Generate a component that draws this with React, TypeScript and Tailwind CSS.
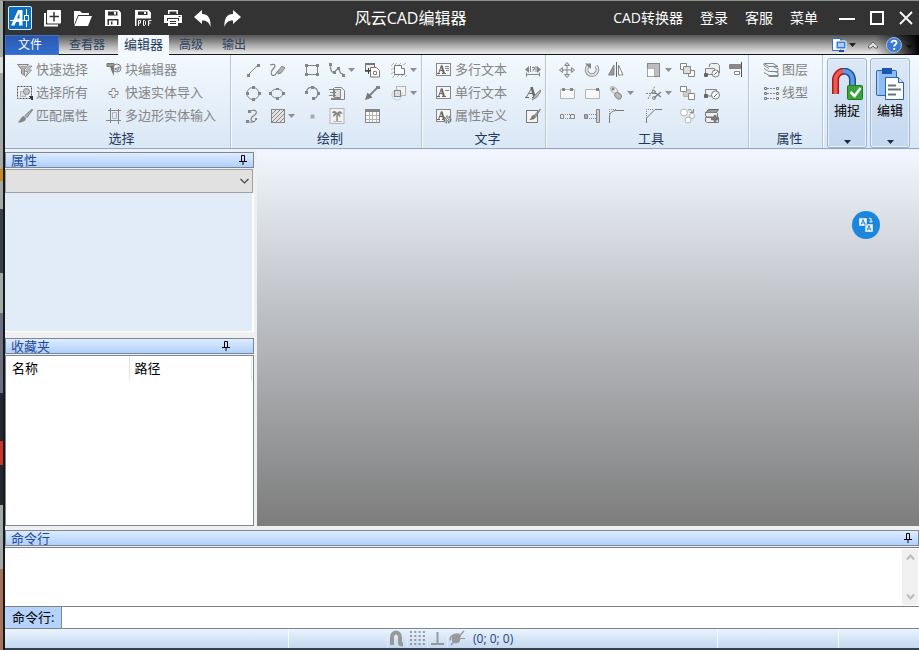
import React, { useState } from 'react';

const G = '#858585';
const L = '#b4b4b4';

// All ribbon drawings live on a 16x16 grid
const icons: Record<string, React.ReactNode> = {
  quickSelect: (
    <>
      <path d="M.5 2.500h11l-4 5v6l-3-2V7.500z" fill="#b0b0b0" stroke={G} />
      <path d="M2 3.500h8" stroke="#ddd" />
      <path d="M12 4 8.500 9.500H11L8.500 15l6-7h-3L15 4z" fill="#ccc" stroke={G} strokeWidth=".8" />
    </>
  ),
  selectAll: (
    <>
      <rect x=".5" y="1.500" width="14" height="12" stroke="#555" strokeDasharray="2 1" />
      <rect x="3.500" y="6.500" width="5" height="5" fill="#ddd" stroke={L} />
      <circle cx="9.500" cy="6.500" r="3" fill="#c4c4c4" stroke={G} />
      <path d="M12 11h4v4h-1.500l-1-1.500z" fill="#333" />
    </>
  ),
  brush: (
    <>
      <path d="M15 1 8 7.500l2 2L15.500 2z" fill="#aaa" stroke={G} />
      <path d="M7 8c-3 0-3 4-6.500 6.500C5 15 9 13 9 10z" fill={G} />
    </>
  ),
  blockEdit: (
    <>
      <path d="M1 1.500h7v3H1z" fill="#999" stroke="#777" />
      <path d="M4 4.500h4V14L5.500 9z" fill="#777" />
      <circle cx="11" cy="6" r="4" stroke={G} />
      <path d="m8.500 7 5-2-1.500 3.500z" fill="#ddd" stroke={G} />
    </>
  ),
  plus: <path d="M6 3.500h3v3h3v3H9v3H6v-3H3v-3h3z" fill="#f4f4f4" stroke={G} />,
  polyImport: (
    <>
      <path d="M4.500 0v15M0 12.500h15M12.500 1v15M2 2.500h13" stroke={G} />
      <path d="M6.500 4.500h4v6h-4z" stroke={L} />
    </>
  ),
  line: (
    <>
      <path d="m3 13 10-10" stroke={G} />
      <path d="M2 12h3v3H2zM12 2h3v3h-3z" fill={G} />
    </>
  ),
  circle: (
    <>
      <circle cx="8" cy="8.500" r="6" stroke={G} />
      <path d="M7 1h3v3H7zM7 13h3v3H7zM1 7h3v3H1zM13 7h3v3h-3z" fill={G} />
    </>
  ),
  spline: (
    <>
      <path d="M4 3.500c8-4 9 2 5 4s-4 7 1 6" stroke={G} strokeWidth="1.200" />
      <path d="M3 2h3v3H3zM1 12h3v3H1zM10 10h2v2h-2z" fill={G} />
      <path d="M3 13.500c4 1.500 7 .5 8-2.500" stroke={G} />
    </>
  ),
  sketch: (
    <>
      <path d="M1 3c6-2 6 1 3 4s-2 8 2 6l3-4" stroke={G} strokeWidth="1.200" />
      <path d="m9 9 4-5 3 2-4 5-3 1z" fill="#b4b4b4" stroke={G} />
    </>
  ),
  ellipse: (
    <>
      <ellipse cx="8" cy="8.500" rx="6" ry="4.500" stroke={G} />
      <path d="M7 3h3v2H7zM7 12h3v3H7zM0 7h3v3H0zM13 7h3v3h-3z" fill={G} />
    </>
  ),
  hatch: (
    <>
      <rect x="2.500" y="1.500" width="13" height="13" fill="#e4e4e4" stroke={G} />
      <path d="m3 6 4-4M3 10l8-8M3 14 15 2M7 14l8-8M11 14l4-4" stroke={G} />
    </>
  ),
  rect: (
    <>
      <rect x="2.500" y="3.500" width="11" height="9" stroke={G} />
      <path d="M1 2h3v3H1zM12 2h3v3h-3zM1 11h3v3H1zM12 11h3v3h-3z" fill={G} />
    </>
  ),
  arc: (
    <>
      <path d="M2.500 7C3 1 13 .5 14 7.500c0 4-2 6-5 6" stroke={G} strokeWidth="1.200" />
      <path d="M1 6h3v3H1zM7 1h3v3H7zM13 7h3v3h-3zM8 12h3v3H8z" fill={G} />
    </>
  ),
  point: <path d="M6.500 6.500h4v4h-4z" fill="#aaa" />,
  polyline: (
    <>
      <path d="M1.500 2v4c1 4 2 5 4 4l4-4 2 5 4 2" stroke={G} strokeWidth="1.200" />
      <path d="M0 1h3v3H0zM4 9h3v3H4zM8 5h3v3H8zM13 12h3v3h-3z" fill={G} />
    </>
  ),
  xref: (
    <>
      <path d="M5.500 2.500h7l3 3v9h-8" fill="#f2f2f2" stroke={G} />
      <path d="M5.500 4.500h6v8h-6z" fill="#ddd" stroke={G} />
      <path d="M0 4.500h7M1 7.500h6M0 10.500h7M4.500 3v9" stroke={G} />
      <path d="M2 14h10" stroke={G} strokeWidth="2" />
    </>
  ),
  image: (
    <>
      <rect x="1" y=".5" width="14" height="15" fill="#f2f2f2" stroke={L} />
      <path d="M8.500 5c-1 3 0 6-.5 8" stroke={G} strokeWidth="1.500" />
      <path d="M8 5C6 2 3.500 3 3 5l3 .2C4 6 4 8 4.500 9L8 6l3 3.500c.8-1.500.3-3-1-4l3.500.5C13 3 10 2 8 5z" fill={G} />
      <path d="M4 13.500h9" stroke={L} />
    </>
  ),
  blockInsert: (
    <>
      <rect x="1.500" y="1.500" width="9" height="8" fill="#eee" stroke="#777" />
      <path d="M1 1h10v2H1z" fill="#777" />
      <path d="M6.500 5.500h6l3 3v6.500h-9z" fill="#fff" stroke="#777" />
      <path d="M9.500 9.500h3v3h-3z" stroke={G} />
      <path d="M1 8.500h6M4.500 6v6" stroke="#444" />
    </>
  ),
  leader: (
    <>
      <path d="m14 2-9 9" stroke={G} strokeWidth="2" />
      <path d="M1 15 3.500 7.500l5 5z" fill="#777" />
      <path d="M12 1h4v3h-4z" fill={G} />
    </>
  ),
  table: (
    <>
      <rect x="1.500" y="1.500" width="14" height="13" fill="#f8f8f8" stroke={G} />
      <path d="M1 1h15v3H1z" fill={G} />
      <path d="M2 7.500h13M2 11.500h13M5.500 4v10M8.500 4v10M12.500 4v10" stroke={L} />
    </>
  ),
  region: (
    <>
      <path d="m0 4 3-3M4 3l2-2M8 3l2-2M12 3l3-2M0 8l3-2M0 12l3-2M1 16l3-3M6 15l2-2M10 15l2-2M14 15l2-2" stroke={L} />
      <path d="M3.500 3.500h7v3h3v6h-10z" fill="#fff" stroke="#777" />
    </>
  ),
  regionAlt: (
    <>
      <rect x="5.500" y="1.500" width="9" height="9" fill="#f2f2f2" stroke={L} />
      <circle cx="6" cy="10" r="5" stroke="#ccc" />
      <rect x="3.500" y="5.500" width="6" height="6" fill="#ddd" stroke={G} />
    </>
  ),
  stretchText: (
    <>
      <path d="M1 12.500h14M1.500 10.500v4M14.500 10.500v4" stroke={G} />
      <path d="M0 7.500 4 4v7zM16 7.500 12 4v7z" fill={G} />
      <path d="M5.500 4v6M7 5.500h2.500v2H8v2M11 4v6" stroke={G} />
    </>
  ),
  textStyle: (
    <>
      <path d="m1.500 12 5-9" stroke="#777" />
      <path d="m6.500 2 3 10" stroke="#666" strokeWidth="2.500" />
      <path d="M4 8.500h4M0 12.500h4M7 12.500h4" stroke="#666" />
      <path d="M15.500 5 10 10l-3 5 5-3 4-6z" fill="#bbb" stroke={G} />
    </>
  ),
  textEdit: (
    <>
      <rect x="1.500" y="2.500" width="11" height="12" fill="#f4f4f4" stroke="#777" />
      <path d="m15.500 1-6 6 1.500 1.500z" fill="#aaa" stroke="#777" />
      <path d="M9 7c-3 0-2 3-5 5 4 0 6-1 7-3z" fill="#777" />
    </>
  ),
  move: (
    <>
      <path d="M8 2v12M2 8h12" stroke={G} />
      <path d="m8 .5 2.500 3h-5zM8 15.500l-2.500-3h5zM.5 8l3-2.500v5zM15.500 8l-3 2.500v-5z" fill="#ddd" stroke={G} />
    </>
  ),
  rotate: (
    <>
      <path d="M4 4c-3 4-1 9 4 9s7-6 4-9" stroke={G} strokeWidth="3.500" />
      <path d="M4 4c-3 4-1 9 4 9s7-6 4-9" stroke="#e4e4e4" strokeWidth="1.800" />
      <path d="M1 1.500h6V7z" fill={G} />
    </>
  ),
  mirror: (
    <>
      <path d="M6 3v10H.5z" fill="#999" stroke={G} />
      <path d="M10.500 3v10H15z" fill="#fff" stroke={G} />
      <path d="M8.500 0v15" stroke="#666" />
    </>
  ),
  joinA: (
    <>
      <path d="M1.500 4.500h14v9h-14z" fill="#f8f8f8" stroke={L} />
      <path d="M3 3h3v3H3zM11 3h3v3h-3z" fill={G} />
    </>
  ),
  joinB: (
    <>
      <path d="M1.500 4.500h14v9h-14z" fill="#f8f8f8" stroke={L} />
      <path d="M12 3h3v3h-3z" fill={G} />
    </>
  ),
  trimBetween: (
    <>
      <path d="M1.500 6.500h3v4h-3zM11.500 6.500h4v4h-4z" fill="#eee" stroke={G} />
      <path d="M6 6.500h5M6 10.500h5" stroke={G} strokeDasharray="1 1" />
    </>
  ),
  extend: (
    <>
      <path d="M.5 6.500h3v4h-3z" fill="#aaa" stroke={G} />
      <path d="M5 6.500h7M5 10.500h7" stroke={G} strokeDasharray="1 1" />
      <path d="M12.500 1.500h3v13h-3z" fill="#ccc" stroke={G} />
    </>
  ),
  explode: (
    <>
      <ellipse cx="6" cy="5" rx="4" ry="2.500" transform="rotate(40 6 5)" fill="#eee" stroke={L} />
      <circle cx="5" cy="4" r="1.500" fill={G} />
      <rect x="7" y="8" width="7" height="5" rx="2" transform="rotate(40 10 10)" fill="#bbb" stroke={G} />
    </>
  ),
  fillet: (
    <>
      <path d="M1.500 15V9C1.500 5 4 2.500 9 2.500h7" stroke="#777" />
      <path d="M1.500 8V1.500H9" stroke={G} strokeDasharray="1 1" />
    </>
  ),
  scale: (
    <>
      <rect x="1.500" y="1.500" width="12" height="13" fill="#bdbdbd" stroke={G} />
      <rect x="1.500" y="6.500" width="7" height="8" fill="#fff" stroke={G} strokeDasharray="1 1" />
    </>
  ),
  trim: (
    <>
      <path d="m2 14 7-13M0 8.500h14" stroke={G} strokeDasharray="2 1" />
      <path d="m8 7 7 5M8 13l7-6" stroke={G} strokeWidth="1.500" />
      <circle cx="8" cy="7" r="1.500" stroke={G} />
      <circle cx="8" cy="13" r="1.500" stroke={G} />
    </>
  ),
  chamfer: (
    <>
      <path d="M.5 15v-5L9 1.500h7" stroke="#777" />
      <path d="M.5 10V1.500H8" stroke={G} strokeDasharray="1 1" />
    </>
  ),
  copy: (
    <>
      <path d="M1.500 1.500h6v6h-6zM9.500 8.500h6v6h-6z" fill="#fff" stroke={G} />
      <path d="M4.500 4.500h7v7h-7z" fill="#ddd" stroke={G} />
    </>
  ),
  array: (
    <>
      <path d="M4.500 4.500h7v7h-7z" fill="#ccc" stroke={L} />
      <path d="M1.500 1.500h6v5h-6zM9.500 8.500h6v6h-6z" fill="#fff" stroke={G} />
    </>
  ),
  polar: (
    <>
      <circle cx="5" cy="4.500" r="3.500" fill="#fff" stroke={L} />
      <circle cx="13" cy="8" r="2.500" fill="#fff" stroke={L} />
      <circle cx="9" cy="12" r="3" fill="#fff" stroke={L} />
      <path d="M9 2c2-1 4 0 4 2M14.500 1v3.500H11" stroke={G} />
    </>
  ),
  offsetA: (
    <>
      <path d="M5.500 5V2.500l2-1h6l2 2V11M1.500 6.500h9v6h-9z" fill="#eee" stroke={G} />
      <circle cx="11.500" cy="11.500" r="3.500" fill="#fff" stroke="#777" />
      <path d="m10 13 3.500-3.500M.5 11.500h3v3h-3z" fill="#666" stroke="#666" />
    </>
  ),
  offsetB: (
    <>
      <path d="M1.500 10V4.500h11V8M1.500 11H8" stroke={G} />
      <circle cx="11.500" cy="10" r="4" fill="#fff" stroke="#777" />
      <path d="m10 12 3.500-3.500M.5 9.500h3v3h-3z" fill="#666" stroke="#666" />
    </>
  ),
  layersAdd: (
    <>
      <path d="m1.500 5 3-3.500h10L12 5z" fill="#999" stroke="#666" />
      <path d="M1.500 5v3l2 1h10V5M1.500 9.500v4l2 1h11v-5z" fill="#eee" stroke="#777" />
      <path d="M11 7v8M7 11h8" stroke="#777" strokeWidth="2.500" />
    </>
  ),
  align: (
    <>
      <path d="M1.500 2.500h11v4h-11z" fill="#888" stroke={G} />
      <path d="M6.500 9.500h5v3h-5z" fill="#fff" stroke={G} />
      <path d="M13.500 0v15" stroke="#555" />
    </>
  ),
  layers: (
    <path d="M1 1.500h9l5 3H6zM1 6.500l5 3h9v-3l-4-1M1 10.500l5 3h9v-3l-4-1M1 1.500v2l5 3M6 13.500v1h9v-2" stroke={G} />
  ),
  linetype: (
    <>
      <path d="M4 3.500h9M4 8.500h9M4 13.500h9" stroke={G} strokeDasharray="2 1" />
      <path
        d="M1.500 2.500h2v2h-2zM13.500 2.500h2v2h-2zM1.500 7.500h2v2h-2zM13.500 7.500h2v2h-2zM1.500 12.500h2v2h-2zM13.500 12.500h2v2h-2z"
        stroke="#777"
      />
    </>
  ),
};

// "A" in a frame, shared by the three text tools
const textFrame = (extra: React.ReactNode) => (
  <>
    <rect x=".5" y="1.500" width="14" height="12" fill="#f6f6f6" stroke={G} />
    <path d="m2.500 11.500 3-8M3.500 8.500h4M1 11.500h3M6 11.500h4" stroke="#666" />
    <path d="m5.500 3.500 2.500 8" stroke="#666" strokeWidth="2" />
    {extra}
  </>
);
icons.mtext = textFrame(<path d="M9 4.500h4M9 6.500h4M10 8.500h3" stroke={G} />);
icons.text = textFrame(<path d="M9 5.500h4" stroke={G} />);
icons.attdef = textFrame(
  <>
    <circle cx="11.500" cy="11.500" r="3" fill="#ddd" stroke="#777" strokeWidth="2" strokeDasharray="1.500 1" />
    <circle cx="11.500" cy="11.500" r="1" fill="#fff" stroke="#777" />
  </>
);

const Arrow = ({ className = 'text-[#8a8f98]' }: { className?: string }) => (
  <svg className={`shrink-0 ${className}`} width="7" height="4" viewBox="0 0 7 4">
    <path d="M0 0h7L3.500 4z" fill="currentColor" />
  </svg>
);

type ToolProps = { icon: string; label?: string; menu?: boolean };

const Tool = ({ icon, label, menu }: ToolProps) => (
  <button
    type="button"
    aria-label={label ?? icon}
    className="flex items-center gap-[3px] whitespace-nowrap text-[13px] text-[#858585]"
  >
    <svg width="16" height="16" viewBox="0 0 16 16" fill="none" className="shrink-0">
      {icons[icon]}
    </svg>
    {label}
    {menu && <Arrow />}
  </button>
);

const Group = ({ title, className, cols, tools }: { title: string; className: string; cols: string; tools: ToolProps[] }) => (
  <section className="flex flex-col border-r border-[#b4c6dc] pt-[3px] shadow-[1px_0_0_#f8fbff]">
    <div className={`grid grid-flow-col grid-rows-[repeat(3,23px)] ${cols} ${className}`}>
      {tools.map((t) => (
        <Tool key={t.icon} {...t} />
      ))}
    </div>
    <h2 className="pl-2 text-center text-[13px] leading-[22px] text-[#1e395b]">{title}</h2>
  </section>
);

const Pin = () => (
  <button type="button" aria-label="固定" className="text-black">
    <svg width="8" height="10" viewBox="0 0 8 10" fill="none" stroke="currentColor">
      <path d="M2.500 6V.5h3V6M0 6.500h8M4 7v3M5.500 1v5" />
    </svg>
  </button>
);

const PanelTitle = ({ children, pad = 'pr-1.5' }: { children: React.ReactNode; pad?: string }) => (
  <div
    className={`flex h-4 items-center justify-between border border-[#7b8794] bg-linear-to-b from-[#deecff] to-[#b0d0fc] pl-[5px] ${pad}`}
  >
    <h3 className="text-[13px] leading-[14px] text-[#1f4a9c]">{children}</h3>
    <Pin />
  </div>
);

const quickIcons: { name: string; art: React.ReactNode }[] = [
  {
    name: '新建',
    art: (
      <>
        <path d="M2 4v12.500h13" stroke="white" strokeWidth="2" />
        <rect x="4" y="1" width="14" height="13.500" rx="1" fill="white" />
        <path d="M11 3v9.500M6.500 7.500h9.500" stroke="#333" strokeWidth="1.500" />
      </>
    ),
  },
  {
    name: '打开',
    art: (
      <>
        <path d="M1 16V2h6l2 2h7v2H5z" fill="white" />
        <path d="M5.500 7H19l-4 10H1.500z" fill="white" />
      </>
    ),
  },
  {
    name: '保存',
    art: (
      <>
        <path d="M2 1h13.500L18 3.500V17H2z" fill="white" />
        <path d="M5 2.500h9.500v4H5zM4.500 10h11v6h-11z" fill="#333" />
        <path d="M11 3h2v2.500h-2zM6 11.500h8V16H6z" fill="white" />
        <path d="M8 12.500h1.500v3H8z" fill="#333" />
      </>
    ),
  },
  {
    name: '保存为 PDF',
    art: (
      <>
        <path d="M2 1h13.500L18 3.500V17H2z" fill="white" />
        <path d="M5 2.500h9.500v3.500H5zM3.500 9.500H18V18H3.500z" fill="#333" />
        <path d="M11 3h2v2h-2z" fill="white" />
        <path d="M5.500 17v-5.500h2v2.500h-2M10.500 11.500v5h1l1-1v-3l-1-1zM15.500 17v-5.500h3M15.500 14h2" stroke="white" />
      </>
    ),
  },
  {
    name: '打印',
    art: (
      <>
        <path d="M5 1h10v4H5zM1 6h18v8H1z" fill="white" />
        <path d="M6.500 2.500h7V5h-7zM4 9h12v3H4z" fill="#333" />
        <path d="M5 10h10v7H5z" fill="white" />
        <path d="M7 12.500h6M7 14.500h6M15.500 7.500h2" stroke="#333" />
      </>
    ),
  },
  { name: '撤销', art: <path d="M1 8 9 1v4c6 0 9 4 8.500 13-1.500-5-4-6.500-8.500-6.500V15z" fill="white" /> },
  { name: '重做', art: <path d="M18 8 10 1v4C4 5 1 9 1.500 18c1.500-5 4-6.500 8.500-6.500V15z" fill="white" /> },
];

const TitleBar = () => (
  <header className="flex h-[34px] items-center bg-[#333333] pl-[3px] text-white">
    <svg width="24" height="24" viewBox="0 0 24 24" fill="none">
      <rect x=".5" y=".5" width="23" height="23" rx="1.500" fill="#0b6fc4" stroke="#d7ecfb" />
      <path d="M3 19.500 10 4h4.500v15.500H11V16H8l-1.500 3.500z" fill="white" />
      <path d="M9 12.500 11.500 7v5.500z" fill="#0b6fc4" />
      <path d="M2 14.500h19M18.500 3v18" stroke="white" />
      <rect x="16.500" y="9.500" width="4" height="5" fill="#0b6fc4" stroke="white" />
    </svg>
    <div className="ml-1.5 flex">
      {quickIcons.map(({ name, art }) => (
        <button key={name} type="button" aria-label={name} className="flex w-[30px] justify-center">
          <svg width="20" height="18" viewBox="0 0 20 18" fill="none">
            {art}
          </svg>
        </button>
      ))}
    </div>
    <h1 className="flex-1 pr-10 text-center text-base leading-[34px]">风云CAD编辑器</h1>
    <nav className="flex gap-[17px] text-sm">
      <button type="button">CAD转换器</button>
      <button type="button">登录</button>
      <button type="button">客服</button>
      <button type="button">菜单</button>
    </nav>
    <div className="ml-[21px] flex gap-[15px] pr-1.5">
      <button type="button" aria-label="最小化">
        <svg width="16" height="16" viewBox="0 0 16 16">
          <path d="M0 9h16" stroke="white" strokeWidth="2" />
        </svg>
      </button>
      <button type="button" aria-label="最大化">
        <svg width="14" height="14" viewBox="0 0 14 14">
          <path d="M1 1h12v12H1z" fill="none" stroke="white" strokeWidth="2" />
        </svg>
      </button>
      <button type="button" aria-label="关闭">
        <svg width="14" height="14" viewBox="0 0 14 14">
          <path d="m1 1 12 12M13 1 1 13" stroke="white" strokeWidth="1.800" />
        </svg>
      </button>
    </div>
  </header>
);

const TabBar = () => {
  const [active, setActive] = useState('编辑器');

  return (
    <div className="flex h-5 items-stretch justify-between bg-linear-to-b from-[#555555] via-[#a8a8a8] to-[#f4f4f4] shadow-[inset_0_-1px_0_#161616]">
      <nav className="flex gap-px">
        <button
          type="button"
          className="w-[54px] border border-[#3f74c8] bg-linear-to-b from-[#2c58ae] to-[#2f6fd0] pr-1 text-xs text-white"
        >
          文件
        </button>
        {['查看器', '编辑器', '高级', '输出'].map((tab) => (
          <button
            key={tab}
            type="button"
            onClick={() => setActive(tab)}
            className={
              tab === active
                ? 'ml-[3px] bg-[#f3f9ff] px-1.5 text-[13px] text-[#1e395b]'
                : 'px-[9px] text-xs text-[#2b4260]'
            }
          >
            {tab}
          </button>
        ))}
      </nav>
      <div className="flex items-center bg-linear-to-r from-transparent from-50% to-black pr-1.5">
        <button type="button" aria-label="窗口" className="flex items-center gap-0.5">
          <svg width="16" height="16" viewBox="0 0 16 16" fill="none">
            <path d="M1.500 1.500h8v12h-8z" fill="white" stroke="#2f6fd0" />
            <rect x="5" y="4" width="10" height="8" rx="1" fill="#3c7ad6" stroke="white" />
            <path d="M7 6h6v4H7z" fill="#a9d0ff" />
            <path d="M8 14h5" stroke="#1d4e9e" strokeWidth="2" />
          </svg>
          <Arrow className="text-[#222222]" />
        </button>
        <button type="button" aria-label="折叠" className="ml-3">
          <svg width="10" height="8" viewBox="0 0 10 8" fill="none" stroke="#666">
            <path d="m.5 5 4.500-4 4.500 4v2H7L5 5 3 7H.5z" fill="#ddd" />
          </svg>
        </button>
        <button type="button" aria-label="帮助" className="ml-2">
          <svg width="16" height="16" viewBox="0 0 16 16" fill="none">
            <circle cx="8" cy="8" r="7.500" fill="#3c78d2" stroke="#9cbcec" />
            <path d="M5.500 6c0-3.500 5.500-3 5 0-.3 1.500-2.300 1.500-2.300 3.500M8.200 11v2" stroke="white" strokeWidth="1.800" />
          </svg>
        </button>
        <span className="ml-1 pt-1">
          <Arrow className="text-[#111111]" />
        </span>
      </div>
    </div>
  );
};

const bigButton =
  'flex w-10 flex-col items-center rounded-[3px] border border-[#9db4d2] bg-linear-to-b from-[#dce8f6] to-[#c3d7ef] pt-[9px] pb-[3px] text-[13px] text-black shadow-[inset_0_0_0_1px_#e6f0fb]';

const Ribbon = () => (
  <div className="flex h-[94px] border-b border-[#8ea6c6] bg-linear-to-b from-[#f3f9ff] via-[#e6f0fa] to-[#dae7f5]">
    <Group
      title="选择"
      className="gap-x-[18px] pl-3 pr-3.5"
      cols=""
      tools={[
        { icon: 'quickSelect', label: '快速选择' },
        { icon: 'selectAll', label: '选择所有' },
        { icon: 'brush', label: '匹配属性' },
        { icon: 'blockEdit', label: '块编辑器' },
        { icon: 'plus', label: '快速实体导入' },
        { icon: 'polyImport', label: '多边形实体输入' },
      ]}
    />
    <Group
      title="绘制"
      className="pl-3.5 pr-1"
      cols="grid-cols-[24px_35px_25px_35px_27px_26px]"
      tools={[
        { icon: 'line' },
        { icon: 'circle' },
        { icon: 'spline' },
        { icon: 'sketch' },
        { icon: 'ellipse' },
        { icon: 'hatch', menu: true },
        { icon: 'rect' },
        { icon: 'arc' },
        { icon: 'point' },
        { icon: 'polyline', menu: true },
        { icon: 'xref' },
        { icon: 'image' },
        { icon: 'blockInsert' },
        { icon: 'leader' },
        { icon: 'table' },
        { icon: 'region', menu: true },
        { icon: 'regionAlt', menu: true },
      ]}
    />
    <Group
      title="文字"
      className="pl-3.5 pr-1"
      cols="grid-cols-[89px_16px]"
      tools={[
        { icon: 'mtext', label: '多行文本' },
        { icon: 'text', label: '单行文本' },
        { icon: 'attdef', label: '属性定义' },
        { icon: 'stretchText' },
        { icon: 'textStyle' },
        { icon: 'textEdit' },
      ]}
    />
    <Group
      title="工具"
      className="pl-[13px] pr-1"
      cols="grid-cols-[25px_24px_38px_33px_25px_24px_16px]"
      tools={[
        { icon: 'move' },
        { icon: 'joinA' },
        { icon: 'trimBetween' },
        { icon: 'rotate' },
        { icon: 'joinB' },
        { icon: 'extend' },
        { icon: 'mirror' },
        { icon: 'explode', menu: true },
        { icon: 'fillet' },
        { icon: 'scale', menu: true },
        { icon: 'trim', menu: true },
        { icon: 'chamfer' },
        { icon: 'copy' },
        { icon: 'array' },
        { icon: 'polar' },
        { icon: 'offsetA' },
        { icon: 'offsetB' },
        { icon: 'layersAdd' },
        { icon: 'align' },
      ]}
    />
    <Group
      title="属性"
      className="pl-3.5 pr-3.5"
      cols=""
      tools={[
        { icon: 'layers', label: '图层' },
        { icon: 'linetype', label: '线型' },
      ]}
    />
    <div className="flex gap-[3px] pl-1 pt-[3px]">
      <button type="button" className={bigButton}>
        <svg width="32" height="32" viewBox="0 0 32 32" fill="none">
          <path d="M4.500 26V12a9 9 0 0 1 9-9" stroke="#a81818" strokeWidth="7" />
          <path d="M4.500 26V12a9 9 0 0 1 9-9" stroke="#ee5a50" strokeWidth="4" />
          <path d="M12 3c6 0 9.500 4 9.500 9v6" stroke="#1d4e9e" strokeWidth="7" />
          <path d="M12 3c6 0 9.500 4 9.500 9v6" stroke="#5f9ce6" strokeWidth="4" />
          <rect x="16.500" y="17.500" width="15" height="14" rx="1" fill="#3aa23a" stroke="#1f7a1f" />
          <path d="m19.500 24 4 4 6-8" stroke="white" strokeWidth="2.500" />
        </svg>
        <span className="leading-5">捕捉</span>
        <span className="mt-auto">
          <Arrow className="text-[#1e2b3c]" />
        </span>
      </button>
      <button type="button" className={bigButton}>
        <svg width="32" height="32" viewBox="0 0 32 32" fill="none">
          <rect x="2.500" y="2.500" width="20" height="25" rx="1" fill="#8fbdf2" stroke="#2763bd" />
          <path d="M4 4v22" stroke="#d2e6ff" />
          <path d="M8 0h10v6H8z" fill="#1d56b0" />
          <path d="M11.500 9.500h13l5 5v17h-18z" fill="white" stroke="#2763bd" />
          <path d="M24.500 9.500v5h5" fill="#cfe1f8" stroke="#2763bd" />
          <path d="M14 17.500h8M14 21.500h13M14 26.500h8" stroke="#6b7280" strokeWidth="2" />
        </svg>
        <span className="leading-5">编辑</span>
        <span className="mt-auto">
          <Arrow className="text-[#1e2b3c]" />
        </span>
      </button>
    </div>
  </div>
);

const SidePanels = () => (
  <aside className="flex w-[249px] flex-col">
    <PanelTitle>属性</PanelTitle>
    <div className="relative mr-px mt-px">
      <select
        aria-label="属性"
        className="block h-6 w-full appearance-none border border-[#a0a0a0] bg-[#e1e1e1] text-[13px]"
      />
      <svg className="pointer-events-none absolute right-1 top-2" width="9" height="8" viewBox="0 0 9 8" fill="none">
        <path d="m.5 2 4 4 4-4" stroke="#444" strokeWidth="1.200" />
      </svg>
    </div>
    <div className="mb-1.5 h-[139px] border-b border-r-2 border-white bg-[#e2ecf8]" />
    <PanelTitle pad="pr-[23px]">收藏夹</PanelTitle>
    <div className="mt-px flex-1 border border-[#7b8794] bg-white pr-px">
      <table className="w-full table-fixed text-left text-[13px]">
        <thead>
          <tr className="h-[25px]">
            <th className="w-[123px] border-r border-[#e5e5e5] pl-1.5 font-normal">名称</th>
            <th className="border-r border-[#e5e5e5] pl-[5px] font-normal">路径</th>
          </tr>
        </thead>
        <tbody />
      </table>
    </div>
  </aside>
);

const CommandLine = () => {
  const [command, setCommand] = useState('');

  return (
    <section>
      <PanelTitle>命令行</PanelTitle>
      <div className="mt-px flex h-[60px] border-y border-[#808080] bg-white">
        <textarea readOnly aria-label="命令行" className="h-full flex-1 resize-none outline-none" />
        <div className="my-px mr-px flex w-4 flex-col items-center justify-between bg-[#f0f0f0] py-[5px]">
          <button type="button" aria-label="向上">
            <svg width="9" height="7" viewBox="0 0 9 7" fill="none" className="block">
              <path d="m1 5.500 3.500-4 3.500 4" stroke="#bcbcbc" strokeWidth="2" />
            </svg>
          </button>
          <button type="button" aria-label="向下">
            <svg width="9" height="7" viewBox="0 0 9 7" fill="none" className="block">
              <path d="m1 1.500 3.500 4 3.500-4" stroke="#bcbcbc" strokeWidth="2" />
            </svg>
          </button>
        </div>
      </div>
      <div className="flex h-[22px] border-b border-[#7b8794] bg-white">
        <label
          htmlFor="command"
          className="border-r border-[#7b8794] bg-[#b5d3fd] px-[7px] text-[13px] leading-[20px] text-black"
        >
          命令行:
        </label>
        <input
          id="command"
          value={command}
          onChange={(e) => setCommand(e.target.value)}
          className="flex-1 px-1 text-[13px] outline-none"
        />
      </div>
    </section>
  );
};

const statusIcons: { name: string; art: React.ReactNode }[] = [
  { name: '对象捕捉', art: <path d="M3 15V7c0-6 8-6 8 0v6c0 1 1 1.500 3 1.500" strokeWidth="4" /> },
  {
    name: '栅格',
    art: <path d="M1 2h15M1 6h15M1 10h15M1 14h15" strokeWidth="2" strokeDasharray="2 2.300" />,
  },
  { name: '正交', art: <path d="M8.500 2v12M2 14h13" strokeWidth="2" /> },
  {
    name: '极轴',
    art: (
      <>
        <path d="m2 15 13-14M1 10.500C1 4 10 2 11.500 7" strokeWidth="1.500" />
        <circle cx="7" cy="9" r="4" fill="#999" />
        <path d="M11 8.500h5" />
      </>
    ),
  },
];

const StatusBar = () => (
  <footer className="flex h-[21px] border-b-2 border-[#344250] bg-linear-to-b from-[#eaf3fc] to-[#c4d9f1]">
    <div className="w-[284px] border-r border-[#f4f9ff]" />
    <div className="flex flex-1 items-center border-r border-[#f4f9ff] pl-[98px]">
      {statusIcons.map(({ name, art }) => (
        <button key={name} type="button" aria-label={name} className="w-5 border-l border-[#e2edf9] pl-px">
          <svg width="17" height="17" viewBox="0 0 17 17" fill="none" stroke="#999" className="block">
            {art}
          </svg>
        </button>
      ))}
      <span className="pl-1.5 text-xs leading-4 text-[#1f3f7c]">(0; 0; 0)</span>
    </div>
    <div className="w-[121px] border-r border-[#f4f9ff]" />
    <div className="w-20" />
  </footer>
);

export default function App() {
  return (
    <div className="flex h-screen min-h-[560px] border-t border-[#8a8f8c] bg-[#f0f0f0] font-['Open_Sans','Noto_Sans_CJK_SC',sans-serif]">
      {/* sliver of the desktop behind the window */}
      <div className="flex w-[5px] shrink-0 flex-col border-r-2 border-[#15181c] bg-[#a3aaa6]">
        <div className="mt-14 h-4 bg-[#d9dcda]" />
        <div className="mt-24 h-3 bg-[#c88a1c]" />
        <div className="mt-7 h-16 bg-[#3b3f4a]" />
        <div className="mt-10 h-20 bg-[#6b6f80]" />
        <div className="h-12 bg-[#24262e]" />
        <div className="h-6 bg-[#c8372c]" />
        <div className="h-10 bg-[#23262c]" />
        <div className="mt-16 flex-1 bg-[#a5735c]" />
      </div>
      <div className="flex min-w-0 flex-1 flex-col">
        <TitleBar />
        <TabBar />
        <Ribbon />
        <main className="flex flex-1 gap-[3px]">
          <div className="flex pt-[3px]">
            <SidePanels />
          </div>
          <div className="relative mt-px flex-1 bg-linear-to-b from-[#f2f7ff] to-[#7d7d7d]">
            <button
              type="button"
              aria-label="翻译"
              className="absolute right-[39px] top-[61px] flex size-7 items-center justify-center rounded-full bg-[#1b86dc]"
            >
              <svg width="16" height="16" viewBox="0 0 16 16" fill="none">
                <path d="M1 1h8v8H1zM7 7h8v8H7z" fill="white" stroke="#1b86dc" strokeWidth=".5" />
                <path d="m3 7.500 2-5 2 5M3.500 6h3M9 13.500l2-5 2 5M9.500 12h3" stroke="#1b86dc" />
                <path d="M11 1.500h2V5M11.500 4l1.500 1.500L14.500 4" stroke="white" />
              </svg>
            </button>
          </div>
        </main>
        <div className="pt-1">
          <CommandLine />
        </div>
        <StatusBar />
      </div>
    </div>
  );
}
